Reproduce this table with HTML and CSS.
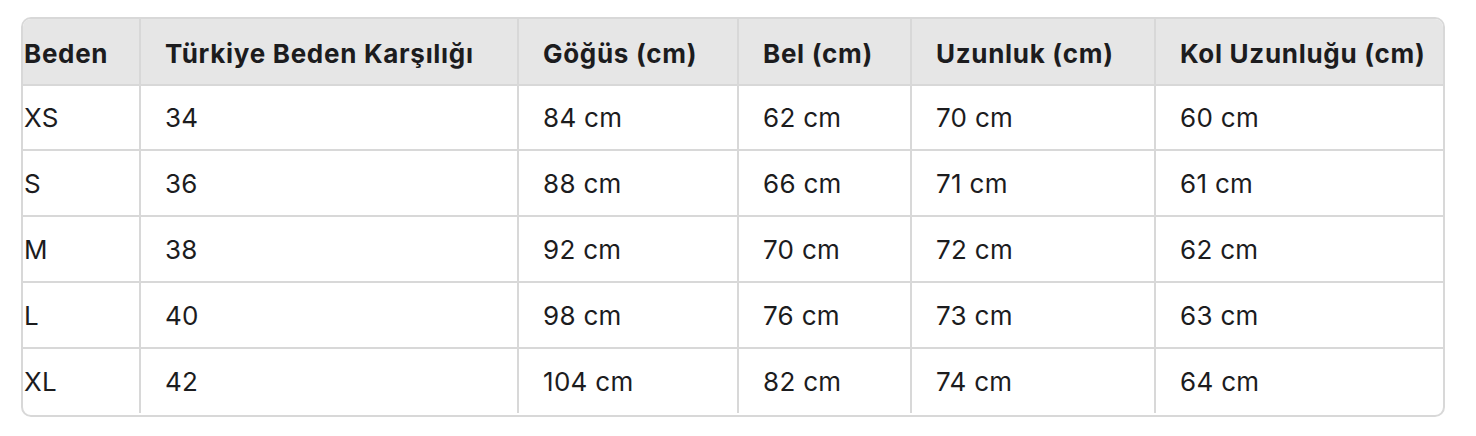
FILE: index.html
```html
<!DOCTYPE html>
<html lang="tr">
<head>
<meta charset="utf-8">
<title>Beden Tablosu</title>
<link rel="stylesheet" href="styles.css">
</head>
<body>
<div class="page">
  <div class="size-table">
    <div class="cell head">Beden</div>
    <div class="cell head">Türkiye Beden Karşılığı</div>
    <div class="cell head">Göğüs (cm)</div>
    <div class="cell head">Bel (cm)</div>
    <div class="cell head">Uzunluk (cm)</div>
    <div class="cell head last-col">Kol Uzunluğu (cm)</div>

    <div class="cell">XS</div>
    <div class="cell">34</div>
    <div class="cell">84 cm</div>
    <div class="cell">62 cm</div>
    <div class="cell">70 cm</div>
    <div class="cell last-col">60 cm</div>

    <div class="cell">S</div>
    <div class="cell">36</div>
    <div class="cell">88 cm</div>
    <div class="cell">66 cm</div>
    <div class="cell">71 cm</div>
    <div class="cell last-col">61 cm</div>

    <div class="cell">M</div>
    <div class="cell">38</div>
    <div class="cell">92 cm</div>
    <div class="cell">70 cm</div>
    <div class="cell">72 cm</div>
    <div class="cell last-col">62 cm</div>

    <div class="cell">L</div>
    <div class="cell">40</div>
    <div class="cell">98 cm</div>
    <div class="cell">76 cm</div>
    <div class="cell">73 cm</div>
    <div class="cell last-col">63 cm</div>

    <div class="cell last-row">XL</div>
    <div class="cell last-row">42</div>
    <div class="cell last-row">104 cm</div>
    <div class="cell last-row">82 cm</div>
    <div class="cell last-row">74 cm</div>
    <div class="cell last-row last-col">64 cm</div>
  </div>
</div>
</body>
</html>
```

FILE: styles.css
```css
html, body {
  margin: 0;
  padding: 0;
  background: #ffffff;
}

body {
  font-family: Inter, "Noto Sans", "Liberation Sans", sans-serif;
  color: #1c1c1e;
}

.page {
  padding: 17px 0 0 21px;
}

.size-table {
  display: grid;
  grid-template-columns: 118px 378px 220px 173px 244px 287px;
  grid-auto-rows: 66px;
  width: max-content;
  border: 2px solid #d8d8d8;
  border-radius: 10px;
  overflow: hidden;
}

.cell {
  box-sizing: border-box;
  display: flex;
  align-items: center;
  padding: 2px 0 0 24px;
  border-right: 2px solid #d8d8d8;
  border-bottom: 2px solid #d8d8d8;
  font-size: 26px;
  line-height: 30px;
  letter-spacing: 0.3px;
  white-space: nowrap;
}

.cell:nth-child(6n+1) {
  padding-left: 1px;
}

.head {
  background: #e6e6e6;
  font-weight: 700;
  letter-spacing: 0.7px;
  height: 67px;
  padding-top: 4px;
}

.last-col {
  border-right: none;
}

.last-row {
  border-bottom: none;
  height: 64px;
}
```
